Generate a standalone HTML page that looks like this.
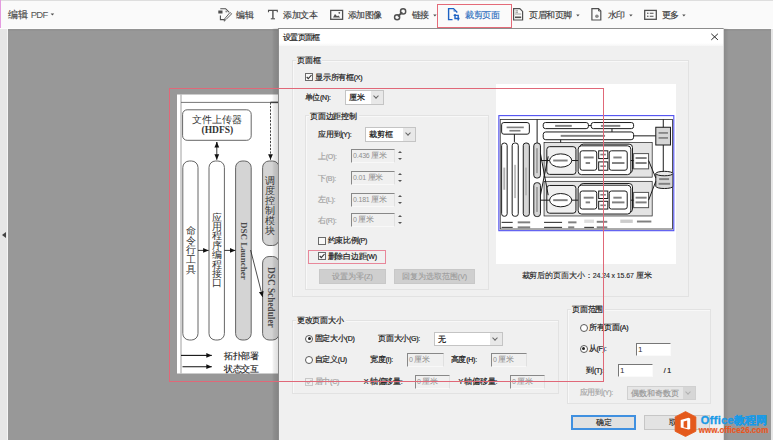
<!DOCTYPE html>
<html><head><meta charset="utf-8">
<style>
*{box-sizing:border-box;margin:0;padding:0}
html,body{width:773px;height:440px;overflow:hidden;background:#989898;font-family:"Liberation Sans",sans-serif;}
s{text-decoration:none}
.a{position:absolute}
.t{position:absolute;white-space:nowrap;line-height:10px;font-size:8px;color:#1a1a1a;-webkit-text-stroke:0.2px;letter-spacing:-0.25px}
.tb{color:#3c3c3c;-webkit-text-stroke:0.15px}
.dis{color:#a5a5a5}
.pt{position:absolute;white-space:nowrap;font-family:"Liberation Serif",serif;font-size:9.5px;line-height:11px;color:#333}
.pt.b{font-weight:bold;color:#333}
.pt.v{width:10px;text-align:center;line-height:9.7px}
.rot{transform-origin:0 0;transform:rotate(90deg);line-height:10px;height:10px;margin-left:5px;font-size:10px}
.gb{position:absolute;border:1px solid #e2e2e2;box-shadow:inset 1px 1px 0 #f8f8f8}
.cb{position:absolute;width:8px;height:8px;border:1px solid #6a6a6a;background:#f8f8f8;line-height:0}
.cb svg{position:absolute;left:-1px;top:-1px}
.dcb{border-color:#c8c8c8;background:#f0f0f0}
.rb{position:absolute;width:8px;height:8px;border:1px solid #5a5a5a;border-radius:50%;background:#fff}
.rb.on::after{content:"";position:absolute;left:1.5px;top:1.5px;width:3px;height:3px;border-radius:50%;background:#222}
.sel{position:absolute;border:1px solid #c4c4c4;background:#fff;font-size:8px;line-height:12px;color:#1a1a1a;-webkit-text-stroke:0.2px}
.sel span{position:absolute;left:3px;top:1px}
.sel i{position:absolute;right:0;top:0;bottom:0;width:12px;background:#e8e8e8}
.sel i::after{content:"";position:absolute;left:3px;top:3px;width:3px;height:3px;border-right:1px solid #666;border-bottom:1px solid #666;transform:rotate(45deg)}
.dsel{background:#e6e6e6;color:#999;border-color:#d0d0d0}
.dsel i{background:#d6d6d6}
.dsel i::after{border-color:#b0b0b0}
.inp{position:absolute;border-top:1px solid #888;border-left:1px solid #888;border-right:1px solid #e0e0e0;border-bottom:1px solid #f8f8f8;background:#f0f0f0;font-size:8px;line-height:12px;color:#8e8e8e;letter-spacing:-0.2px}
.inp span{position:absolute;left:1px;top:0}
.inp.w{background:#fff;color:#333;letter-spacing:0;border-right-color:#fafafa;border-bottom-color:#fafafa;border-top-color:#777;border-left-color:#777}
.spin{position:absolute;width:6px;height:12px}
.spin::before{content:"";position:absolute;left:1px;top:1px;border-left:2px solid transparent;border-right:2px solid transparent;border-bottom:2px solid #555}
.spin::after{content:"";position:absolute;left:1px;top:8px;border-left:2px solid transparent;border-right:2px solid transparent;border-top:2px solid #555}
.btn{position:absolute;border:1px solid #c6c6c6;background:#e3e3e3;font-size:8px;line-height:13px;text-align:center;color:#1a1a1a;-webkit-text-stroke:0.1px}
.btn.dis{border-color:#c8c8c8;background:#cfcfcf;color:#9a9a9a}
.btn.def{border:2px solid #4090e0;line-height:11px;background:#e1e1e1}
.caret{position:absolute;border-left:1.7px solid transparent;border-right:1.7px solid transparent;border-top:1.9px solid #555}

</style></head><body>
<div class="a" style="left:0;top:0;width:7px;height:440px;background:#e6e6e6"></div><div class="a" style="left:7px;top:28px;width:1px;height:412px;background:#f4f4f4"></div><div class="a" style="left:2px;top:232px;width:0;height:0;border-top:3px solid transparent;border-bottom:3px solid transparent;border-right:4px solid #444"></div><div class="a" style="left:771px;top:28px;width:2px;height:412px;background:#e6e6e6"></div><div class="a" style="left:0;top:0;width:773px;height:29px;background:#fafafa;border-top:1px solid #dedede;border-bottom:1.5px solid #fdfdfd"></div><div class="a" style="left:8px;top:29px;width:763px;height:2px;background:#939393"></div><div class="a" style="left:0;top:0;width:1px;height:28px;background:#e49be0"></div><div class="t tb" style="left:8px;top:9.00px;font-size:10px;line-height:12px;color:#4a4a4a;-webkit-text-stroke:0.15px">编辑</div><div class="t" style="left:30.8px;top:8.6px;font-size:9.5px;line-height:12px;color:#555;letter-spacing:-0.8px;-webkit-text-stroke:0">PDF</div><svg class="a" style="left:50px;top:13px" width="5" height="4"><path d="M0.6 0.6 H4.2 L2.4 2.6 Z" fill="#505050"/></svg><svg class="a" style="left:0;top:0" width="773" height="28" viewBox="0 0 773 28">
 <g fill="none" stroke="#505050" stroke-width="1.2">
  <!-- edit icon -->
  <path d="M220.3 8.7 H225.6 L229 12.1" stroke-width="1.1"/>
  <path d="M220.4 15.6 V19.6 H224.2" stroke-width="1.1"/>
  <path d="M231.6 13.9 L226 19.5 L224.2 21.2 L224.5 19 L230.1 12.4 Z" stroke-width="0.9"/>
 </g>
 <rect x="218.3" y="10.5" width="4.2" height="3" fill="#505050"/>
 <path d="M225.6 10.4 L227.4 12.2 L225.6 12.2 Z" fill="#505050"/>
 <!-- T icon -->
 <path d="M268.5 12.3 V10.4 H277.3 V12.3" fill="none" stroke="#505050" stroke-width="1.1"/>
 <path d="M272.9 10.4 V18.7" fill="none" stroke="#505050" stroke-width="1.4"/>
 <path d="M270.8 18.8 H275" fill="none" stroke="#505050" stroke-width="1.1"/>
 <!-- image icon -->
 <rect x="330.7" y="10.4" width="11.9" height="8.9" fill="none" stroke="#505050" stroke-width="1.3"/>
 <path d="M333 17.6 L335 14 L337 16.3 L338.3 15.4 L340.2 17.6 Z" fill="#505050"/>
 <circle cx="339.3" cy="12.8" r="0.9" fill="#505050"/>
 <!-- link icon -->
 <g fill="none" stroke="#505050" stroke-width="1.45">
  <circle cx="397.1" cy="17.2" r="2.55"/>
  <circle cx="403.1" cy="11.4" r="2.6"/>
  <path d="M397.9 16.4 L402.3 12.2" stroke-width="1.9"/>
 </g>
 <!-- crop icon -->
 <g fill="none" stroke="#1d62c4" stroke-width="1.4">
  <path d="M452.5 19.6 H448.6 V8.6 H453.5 L457.3 12.5"/>
  <path d="M455 14 V18.5 H459.5"/>
  <path d="M453.6 15.4 H458.2 V20.6"/>
 </g>
 <path d="M453.6 9.8 L455.4 11.6 L453.6 11.6Z" fill="#1d62c4"/>
 <!-- header footer icon -->
 <path d="M513.6 8.6 H519.8 L522.6 11.4 V20 H513.6 Z" fill="none" stroke="#505050" stroke-width="1.2"/>
 <path d="M515.5 10.8 H518 M515.5 12.3 H518" stroke="#808080" stroke-width="0.8"/>
 <rect x="515" y="16.5" width="6.2" height="1.6" fill="#505050"/>
 <rect x="515" y="13.6" width="6.2" height="0.8" fill="#909090"/>
 <!-- watermark icon -->
 <path d="M591.9 8.6 H598.5 L600.8 10.9 V20 H591.9 Z" fill="none" stroke="#505050" stroke-width="1.2"/>
 <circle cx="596.9" cy="16.3" r="1.8" fill="#8a8a8a"/><path d="M598.5 8.6 V11 H600.8" fill="none" stroke="#505050" stroke-width="0.9"/>
 <!-- more icon -->
 <rect x="644.7" y="10.4" width="11.6" height="8.9" fill="none" stroke="#505050" stroke-width="1.3"/>
 <circle cx="647.8" cy="13.3" r="0.8" fill="#505050"/>
 <circle cx="647.8" cy="16.3" r="0.8" fill="#505050"/>
 <path d="M649.8 13.3 H653.5 M649.8 16.3 H653.5" stroke="#505050" stroke-width="1.1"/>
</svg><div class="t tb" style="left:236px;top:9.30px;font-size:9px;line-height:12px;letter-spacing:-0.5px">编辑</div><div class="t tb" style="left:283.4px;top:9.30px;font-size:9px;line-height:12px;letter-spacing:-0.5px">添加文本</div><div class="t tb" style="left:347.5px;top:9.30px;font-size:9px;line-height:12px;letter-spacing:-0.5px">添加图像</div><div class="t tb" style="left:411.8px;top:9.30px;font-size:9px;line-height:12px;letter-spacing:-0.5px">链接</div><div class="t tb" style="left:529.3px;top:9.30px;font-size:9px;line-height:12px;letter-spacing:-0.5px">页眉和页脚</div><div class="t tb" style="left:607.5px;top:9.30px;font-size:9px;line-height:12px;letter-spacing:-0.5px">水印</div><div class="t tb" style="left:661.5px;top:9.30px;font-size:9px;line-height:12px;letter-spacing:-0.5px">更多</div><div class="t tb" style="left:465.3px;top:9.30px;font-size:9px;line-height:12px;letter-spacing:-0.5px;color:#2f6fc0">裁剪页面</div><svg class="a" style="left:432.5px;top:13.5px" width="5" height="4"><path d="M0.2 0.6 H3.6 L1.9 2.6 Z" fill="#505050"/></svg><svg class="a" style="left:576.2px;top:13.5px" width="5" height="4"><path d="M0.2 0.6 H3.6 L1.9 2.6 Z" fill="#505050"/></svg><svg class="a" style="left:628.8px;top:13.5px" width="5" height="4"><path d="M0.2 0.6 H3.6 L1.9 2.6 Z" fill="#505050"/></svg><svg class="a" style="left:682.2px;top:13.5px" width="5" height="4"><path d="M0.2 0.6 H3.6 L1.9 2.6 Z" fill="#505050"/></svg><div class="a" style="left:437px;top:4px;width:75px;height:24px;border:1px solid #e46a78"></div><svg class="a" style="left:0;top:0" width="280" height="440" viewBox="0 0 280 440">
 <defs>
  <marker id="ah" markerWidth="7" markerHeight="7" refX="5.5" refY="3.5" orient="auto" markerUnits="userSpaceOnUse"><path d="M0 1.1 L5.5 3.5 L0 5.9 Z" fill="#111"/></marker>
  <marker id="ahs" markerWidth="6" markerHeight="6" refX="1" refY="3" orient="auto-start-reverse" markerUnits="userSpaceOnUse"><path d="M0 0.8 L5 3 L0 5.2 Z" fill="#222"/></marker>
 </defs>
 <rect x="177" y="94.5" width="101.5" height="279" fill="#fff"/>
 <path d="M181 94.5 V373.4" stroke="#a0a0a0" stroke-width="1"/>
 <path d="M181 102.4 H278" stroke="#666" stroke-width="0.9"/><path d="M270.5 102.4 H278" stroke="#444" stroke-width="1.5"/>
 <rect x="182.6" y="109.8" width="68.6" height="30.5" rx="4.5" fill="#fff" stroke="#555" stroke-width="0.9"/>
 <path d="M216.8 142 V159.8" stroke="#222" stroke-width="0.9" marker-end="url(#ah)"/>
 <path d="M216.8 146 V142" stroke="#222" stroke-width="0.9" marker-end="url(#ah)"/>
 <path d="M270.5 102.4 V159.8" stroke="#333" stroke-width="0.9" stroke-dasharray="2.2 1.3" marker-end="url(#ah)"/>
 <rect x="182.8" y="161" width="15.2" height="179" rx="6.5" fill="#fff" stroke="#555" stroke-width="0.9"/>
 <rect x="209" y="161" width="15.4" height="179" rx="6.5" fill="#fff" stroke="#555" stroke-width="0.9"/>
 <rect x="235.6" y="161" width="15.6" height="179" rx="6.5" fill="#d4d4d4" stroke="#555" stroke-width="0.9"/>
 <rect x="262.6" y="161" width="16.5" height="84.5" rx="6.5" fill="#d4d4d4" stroke="#555" stroke-width="0.9"/>
 <rect x="262.6" y="256.5" width="16.5" height="83.5" rx="6.5" fill="#d4d4d4" stroke="#555" stroke-width="0.9"/>
 <path d="M198 250.4 H208.6" stroke="#222" stroke-width="0.9" marker-end="url(#ah)"/>
 <path d="M224.4 250.4 H235.4" stroke="#222" stroke-width="0.9" marker-end="url(#ah)"/>
 <path d="M250.6 250 L262.6 297" stroke="#222" stroke-width="0.8" marker-end="url(#ah)"/>
 <path d="M181 355.4 H211.8" stroke="#111" stroke-width="1.1" marker-end="url(#ah)"/>
 <path d="M182.5 366.7 H189 M189 366.7 H211.8" stroke="#111" stroke-width="1.1" marker-end="url(#ah)"/>
</svg><div class="pt" style="left:192px;top:114.5px;letter-spacing:0px">文件上传器</div><div class="pt b" style="left:201.5px;top:125.3px;font-size:9.5px">(HDFS)</div><div class="pt v" style="left:185.5px;top:227px;">命<br>令<br>行<br>工<br>具</div><div class="pt v" style="left:211.5px;top:213.5px;line-height:9.4px">应<br>用<br>程<br>序<br>编<br>程<br>接<br>口</div><div class="pt v" style="left:265px;top:177px;line-height:9.9px">调<br>度<br>控<br>制<br>模<br>块</div><div class="pt rot" style="left:243.5px;top:221.5px;width:58px;font-size:9px;font-weight:bold;color:#4a4a4a">DSC Launcher</div><div class="pt rot" style="left:270.8px;top:267px;width:62px;font-size:9.3px;font-weight:bold;color:#4a4a4a">DSC Scheduler</div><div class="pt" style="left:224px;top:351px;font-size:9px;letter-spacing:-0.4px;color:#222;-webkit-text-stroke:0.15px">拓扑部署</div><div class="pt" style="left:224px;top:364px;font-size:9px;letter-spacing:-0.4px;color:#222;-webkit-text-stroke:0.15px">状态交互</div><div class="a" style="left:724px;top:28px;width:5px;height:412px;background:linear-gradient(90deg,rgba(0,0,0,0.09),rgba(0,0,0,0))"></div><div class="a" style="left:271.5px;top:28px;width:6.5px;height:412px;background:linear-gradient(270deg,rgba(0,0,0,0.13),rgba(0,0,0,0.07) 70%,rgba(0,0,0,0))"></div><div class="a" style="left:278px;top:28px;width:446px;height:420px;background:#f0f0f0;border:1px solid #8c8c8c;border-right-color:#d8d8d8"></div><div class="a" style="left:279px;top:29px;width:444px;height:17px;background:linear-gradient(180deg,#fff 0,#fff 14px,#f6f6f6 17px)"></div><div class="t " style="left:283px;top:33.40px;font-size:8px;line-height:10px;letter-spacing:-0.7px">设置页面框</div><svg class="a" style="left:705px;top:30px" width="16" height="14" viewBox="705 30 16 14"><path d="M711.3 33.8 L717.9 39.9 M717.9 33.8 L711.3 39.9" stroke="#2a2a2a" stroke-width="1"/></svg><div class="gb" style="left:292px;top:60px;width:397px;height:237px"></div><div class="gb" style="left:305px;top:115px;width:184px;height:175px"></div><div class="gb" style="left:292px;top:320px;width:267px;height:74px"></div><div class="gb" style="left:567px;top:309px;width:144px;height:95px"></div><div class="a" style="left:296.3px;top:57.7px;width:26px;height:6px;background:#f0f0f0"></div><div class="t " style="left:297.3px;top:56.20px;font-size:8px;line-height:10px;">页面框</div><div class="a" style="left:309px;top:113.3px;width:50px;height:6px;background:#f0f0f0"></div><div class="t " style="left:310px;top:111.80px;font-size:8px;line-height:10px;">页面边距控制</div><div class="a" style="left:295.9px;top:317.3px;width:50px;height:6px;background:#f0f0f0"></div><div class="t " style="left:296.9px;top:315.80px;font-size:8px;line-height:10px;">更改页面大小</div><div class="a" style="left:571px;top:306.5px;width:34px;height:6px;background:#f0f0f0"></div><div class="t " style="left:572px;top:305.00px;font-size:8px;line-height:10px;">页面范围</div><div class="cb" style="left:305px;top:73px"><svg width="8" height="8" viewBox="0 0 8 8"><path d="M1.7 4 L3.3 5.7 L6.5 2" fill="none" stroke="#333" stroke-width="1.1"/></svg></div><div class="t " style="left:315px;top:73.20px;font-size:8px;line-height:10px;">显示所有框<s style="font-size:7px">(X)</s></div><div class="t " style="left:304.5px;top:93.20px;font-size:8px;line-height:10px;">单位<s style="font-size:7px">(N):</s></div><div class="sel" style="left:345px;top:90px;width:39px;height:15px"><span>厘米</span><i></i></div><div class="t " style="left:318px;top:130.00px;font-size:8px;line-height:10px;">应用到<s style="font-size:7px">(Y):</s></div><div class="sel" style="left:365px;top:127px;width:51px;height:15px"><span>裁剪框</span><i></i></div><div class="t dis" style="left:318px;top:151.90px;font-size:8px;line-height:10px;">上<s style="font-size:7px">(O):</s></div><div class="inp" style="left:351px;top:149.4px;width:44px;height:14px"><span><s style="font-size:7px">0.436 </s>厘米</span></div><div class="spin" style="left:397px;top:150.4px"></div><div class="t dis" style="left:318px;top:173.70px;font-size:8px;line-height:10px;">下<s style="font-size:7px">(B):</s></div><div class="inp" style="left:351px;top:171.2px;width:44px;height:14px"><span><s style="font-size:7px">0.01 </s>厘米</span></div><div class="spin" style="left:397px;top:172.2px"></div><div class="t dis" style="left:318px;top:195.00px;font-size:8px;line-height:10px;">左<s style="font-size:7px">(L):</s></div><div class="inp" style="left:351px;top:192.5px;width:44px;height:14px"><span><s style="font-size:7px">0.181 </s>厘米</span></div><div class="spin" style="left:397px;top:193.5px"></div><div class="t dis" style="left:318px;top:215.80px;font-size:8px;line-height:10px;">右<s style="font-size:7px">(R):</s></div><div class="inp" style="left:351px;top:213.3px;width:44px;height:14px"><span><s style="font-size:7px">0 </s>厘米</span></div><div class="spin" style="left:397px;top:214.3px"></div><div class="cb" style="left:318px;top:236.5px"></div><div class="t " style="left:327.5px;top:236.00px;font-size:8px;line-height:10px;">约束比例<s style="font-size:7px">(P)</s></div><div class="cb" style="left:318px;top:251.6px"><svg width="8" height="8" viewBox="0 0 8 8"><path d="M1.7 4 L3.3 5.7 L6.5 2" fill="none" stroke="#333" stroke-width="1.1"/></svg></div><div class="t " style="left:327.5px;top:251.90px;font-size:8px;line-height:10px;">删除白边距<s style="font-size:7px">(W)</s></div><div class="a" style="left:308px;top:250px;width:78px;height:14px;border:1px solid #e8879a"></div><div class="btn dis" style="left:319px;top:269px;width:67px;height:15px">设置为零<s style="font-size:7px">(Z)</s></div><div class="btn dis" style="left:394px;top:269px;width:81px;height:15px">回复为选取范围<s style="font-size:7px">(V)</s></div><div class="a" style="left:496px;top:84px;width:180px;height:180px;background:#fff"></div><svg class="a" style="left:495px;top:112px" width="181" height="122" viewBox="0 0 649 440">
 <defs><marker id="pa" markerWidth="12" markerHeight="12" refX="10" refY="6" orient="auto" markerUnits="userSpaceOnUse"><path d="M0 2 L10 6 L0 10Z" fill="#222"/></marker></defs>
 <g fill="none" stroke="#333" stroke-width="3">
  <rect x="17" y="27" width="621" height="395"/>
 </g>
 <g stroke="#1a1a1a" stroke-width="3.6" fill="#fff">
  <rect x="22" y="38" width="100" height="42" rx="8"/>
  <path d="M68 80 V108" fill="none"/>
  <path d="M150 27 V112" fill="none"/>
  <rect x="22" y="112" width="20" height="264" rx="9"/>
  <rect x="60" y="112" width="22" height="264" rx="9"/>
  <rect x="100" y="112" width="22" height="264" rx="9" fill="#d6d6d6"/>
  <rect x="138" y="112" width="24" height="126" rx="10" fill="#d6d6d6"/>
  <rect x="138" y="255" width="24" height="122" rx="10" fill="#d6d6d6"/>
  <rect x="172" y="38" width="163" height="22" rx="8"/>
  <rect x="345" y="38" width="153" height="22" rx="8"/>
  <rect x="172" y="72" width="326" height="28" rx="9"/>
  <rect x="578" y="55" width="53" height="64" fill="#d6d6d6"/>
  <path d="M498 86 H578 M605 27 V55 M605 119 V215 M235 100 V150 M335 49 H345 M420 60 V72" fill="none"/>
  <rect x="175" y="110" width="390" height="125" fill="#e4e4e4" stroke-width="2.5"/>
  <rect x="175" y="250" width="390" height="125" fill="#e4e4e4" stroke-width="2.5"/>
  <rect x="185" y="125" width="105" height="100" rx="10" fill="#f0f0f0"/>
  <rect x="185" y="265" width="105" height="100" rx="10" fill="#f0f0f0"/>
  <ellipse cx="235" cy="175" rx="40" ry="24"/>
  <ellipse cx="235" cy="318" rx="40" ry="24"/>
  <rect x="304" y="116" width="190" height="104" rx="12" fill="#fff"/>
  <rect x="298" y="122" width="190" height="104" rx="12" fill="#fff"/>
  <rect x="304" y="258" width="190" height="104" rx="12" fill="#fff"/>
  <rect x="298" y="264" width="190" height="104" rx="12" fill="#fff"/>
  <rect x="305" y="140" width="60" height="70" rx="8"/>
  <rect x="372" y="140" width="33" height="28"/>
  <rect x="372" y="180" width="33" height="30"/>
  <rect x="410" y="140" width="65" height="70" rx="8"/>
  <rect x="498" y="150" width="54" height="55" fill="#fff" stroke="#555"/>
  <rect x="305" y="285" width="60" height="65" rx="8"/>
  <rect x="372" y="285" width="33" height="27"/>
  <rect x="372" y="322" width="33" height="28"/>
  <rect x="410" y="285" width="65" height="65" rx="8"/>
  <rect x="498" y="290" width="54" height="55" fill="#fff" stroke="#555"/>
  <path d="M578 222 V268 A31 8 0 0 0 640 268 V222" fill="#d6d6d6"/>
  <ellipse cx="609" cy="222" rx="31" ry="8" fill="#e8e8e8"/>
  <path d="M162 175 H195 M162 318 H195 M275 175 H298 M275 318 H298 M488 175 H498 M488 318 H498 M552 175 L578 238 M552 318 L578 250 M162 150 L190 300 M162 300 L190 160" fill="none"/>
  <path d="M22 398 H62 M22 416 H62 M175 398 H240 M175 416 H240 M320 416 H355" fill="none" stroke-width="3.6" stroke="#222"/>
  <rect x="320" y="388" width="35" height="12" fill="#ddd" stroke="none"/>
  <rect x="450" y="388" width="45" height="12" fill="#ccc" stroke="none"/>
 </g>
 <g fill="#808080" transform="translate(0,0.5)">
  <rect x="40" y="52" width="62" height="6"/><rect x="50" y="64" width="40" height="6"/>
  <rect x="215" y="46" width="60" height="7"/><rect x="380" y="46" width="70" height="7"/>
  <rect x="235" y="82" width="160" height="7"/>
  <rect x="588" y="72" width="34" height="6"/><rect x="588" y="90" width="34" height="6"/>
  <rect x="208" y="171" width="52" height="7"/><rect x="208" y="314" width="52" height="7"/>
  <rect x="318" y="160" width="36" height="7"/><rect x="325" y="180" width="16" height="7"/>
  <rect x="318" y="305" width="36" height="7"/><rect x="325" y="322" width="16" height="7"/>
  <rect x="378" y="150" width="20" height="6"/><rect x="378" y="192" width="20" height="6"/>
  <rect x="378" y="295" width="20" height="6"/><rect x="378" y="333" width="20" height="6"/>
  <rect x="425" y="160" width="30" height="7"/><rect x="420" y="180" width="45" height="7"/>
  <rect x="425" y="305" width="30" height="7"/><rect x="420" y="322" width="45" height="7"/>
  <rect x="505" y="162" width="40" height="7"/><rect x="505" y="180" width="40" height="7"/>
  <rect x="505" y="305" width="40" height="7"/><rect x="505" y="322" width="40" height="7"/>
  <rect x="590" y="238" width="36" height="7"/><rect x="588" y="255" width="42" height="7"/>
  <rect x="28" y="200" width="7" height="80" opacity="0.6"/><rect x="67" y="190" width="7" height="120" opacity="0.5"/>
  <rect x="107" y="200" width="6" height="100" opacity="0.4"/>
  <rect x="146" y="130" width="7" height="90" opacity="0.6"/><rect x="146" y="270" width="7" height="90" opacity="0.6"/>
  <rect x="80" y="394" width="45" height="7"/><rect x="80" y="412" width="45" height="7"/>
  <rect x="262" y="394" width="30" height="7"/><rect x="262" y="412" width="22" height="7"/>
  <rect x="365" y="392" width="38" height="7"/><rect x="365" y="412" width="38" height="7"/>
  <rect x="510" y="391" width="52" height="7"/>
 </g>
 <rect x="12" y="13" width="631" height="415" fill="none" stroke="#5050f0" stroke-width="4"/>
</svg><div class="t " style="left:521.6px;top:270.50px;font-size:8px;line-height:10px;-webkit-text-stroke:0.1px;color:#222;letter-spacing:-0.1px">裁剪后的页面大小：<s style="font-size:7px">24.24 x 15.67 </s>厘米</div><div class="t " style="left:314.6px;top:334.20px;font-size:8px;line-height:10px;">固定大小<s style="font-size:7px">(D)</s></div><div class="rb on" style="left:305px;top:334.7px"></div><div class="t " style="left:378px;top:334.20px;font-size:8px;line-height:10px;">页面大小<s style="font-size:7px">(G):</s></div><div class="sel" style="left:434px;top:332px;width:69px;height:14px"><span>无</span><i></i></div><div class="rb" style="left:305px;top:355.8px"></div><div class="t " style="left:314.6px;top:355.30px;font-size:8px;line-height:10px;">自定义<s style="font-size:7px">(U)</s></div><div class="t " style="left:370px;top:355.30px;font-size:8px;line-height:10px;">宽度<s style="font-size:7px">(I):</s></div><div class="inp" style="left:407px;top:353px;width:37px;height:14px"><span><s style="font-size:7px">0 </s>厘米</span></div><div class="t " style="left:450.7px;top:355.30px;font-size:8px;line-height:10px;">高度<s style="font-size:7px">(H):</s></div><div class="inp" style="left:491px;top:353px;width:36px;height:14px"><span><s style="font-size:7px">0 </s>厘米</span></div><div class="cb dcb" style="left:304.7px;top:377.7px"><svg width="8" height="8" viewBox="0 0 8 8"><path d="M1.7 4 L3.3 5.7 L6.5 2" fill="none" stroke="#c0c0c0" stroke-width="1.2"/></svg></div><div class="t dis" style="left:314.6px;top:377.20px;font-size:8px;line-height:10px;">居中<s style="font-size:7px">(C)</s></div><div class="t " style="left:363.7px;top:377.20px;font-size:8px;line-height:10px;"><s style="font-size:7px">X </s>轴偏移量<s style="font-size:7px">:</s></div><div class="inp" style="left:415px;top:375px;width:35px;height:14px"><span><s style="font-size:7px">0 </s>厘米</span></div><div class="t " style="left:458.4px;top:377.20px;font-size:8px;line-height:10px;"><s style="font-size:7px">Y </s>轴偏移量<s style="font-size:7px">:</s></div><div class="inp" style="left:510px;top:375px;width:35px;height:14px"><span><s style="font-size:7px">0 </s>厘米</span></div><div class="rb" style="left:579.5px;top:323.5px"></div><div class="t " style="left:588.75px;top:323.00px;font-size:8px;line-height:10px;">所有页面<s style="font-size:7px">(A)</s></div><div class="rb on" style="left:579.5px;top:344.75px"></div><div class="t " style="left:588.75px;top:344.25px;font-size:8px;line-height:10px;">从<s style="font-size:7px">(F):</s></div><div class="inp w" style="left:636px;top:342.5px;width:35px;height:13px"><span>1</span></div><div class="t " style="left:586.25px;top:365.50px;font-size:8px;line-height:10px;">到<s style="font-size:7px">(T):</s></div><div class="inp w" style="left:618px;top:364px;width:35px;height:13px"><span>1</span></div><div class="t " style="left:663.75px;top:365.50px;font-size:8px;line-height:10px;"><s style="font-size:7px">/ 1</s></div><div class="t dis" style="left:579.5px;top:387.50px;font-size:8px;line-height:10px;">应用到<s style="font-size:7px">(Y):</s></div><div class="sel dsel" style="left:627px;top:385.5px;width:69px;height:14px"><span>偶数和奇数页</span><i></i></div><div class="btn def" style="left:571px;top:414.5px;width:65px;height:15px">确定</div><div class="btn" style="left:644px;top:414.5px;width:66px;height:15px">取消</div><div class="a" style="left:169px;top:88px;width:435px;height:294px;border:1px solid #e06878"></div><svg class="a" style="left:660px;top:400px" width="113" height="40" viewBox="660 400 113 40">
 <path d="M685.5 411.6 L695.9 416.9 V431.3 L685.5 436.5 L675.1 431.3 V416.9 Z" fill="#e4591c" stroke="#e4591c" stroke-width="0.8" stroke-linejoin="round"/>
 <path d="M680.7 420 L688.5 417.8 L690.2 418.5 V429 L688.5 429.6 L680.7 427.6 Z M683.6 421.4 V427.2 L687.2 427.9 V420.6 Z" fill="#fff" fill-rule="evenodd"/>
</svg><div class="a" style="left:700.8px;top:413.8px;font-size:11px;line-height:13px;font-weight:bold;color:#1a9ae6;white-space:nowrap;letter-spacing:0.35px;-webkit-text-stroke:0.35px #1a9ae6">Office<s style="letter-spacing:0">教程网</s></div><div class="a" style="left:698.8px;top:425.2px;font-size:8px;line-height:9px;font-weight:bold;color:#e8561e;white-space:nowrap;transform:scaleY(1.2);transform-origin:0 0;-webkit-text-stroke:0.15px #e8561e">www.office26.com</div>
</body></html>
